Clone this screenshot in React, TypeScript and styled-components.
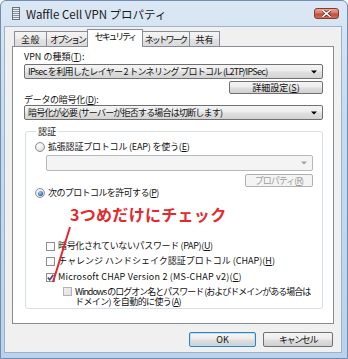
import React from "react";
import styled, { createGlobalStyle, css } from "styled-components";

const Global = createGlobalStyle`
  html, body { margin: 0; padding: 0; background: #ffffff; }
  * { box-sizing: border-box; }
`;

const FONT = `"Noto Sans CJK JP", "Noto Sans", sans-serif`;

const Window = styled.div`
  width: 348px;
  height: 359px;
  display: flex;
  flex-direction: column;
  padding: 0 5px 5px 3px;
  border: 1px solid #6f8db3;
  border-radius: 6px 6px 0 0;
  background: linear-gradient(180deg, #dbe7f4 0%, #c8dbef 30%, #bcd2ea 100%);
  font-family: ${FONT};
  font-size: 9px;
  color: #111;
  overflow: hidden;
`;

const TitleBar = styled.div`
  height: 25px;
  flex: none;
  display: flex;
  align-items: center;
  padding-left: 8px;
`;

const TitleText = styled.span`
  margin-left: 6px;
  font-size: 11.5px;
  line-height: 14px;
  color: #1a1a1a;
`;

const CloseButton = styled.div`
  margin-left: auto;
  margin-right: 3px;
  width: 25px;
  height: 11px;
  border: 1px solid #8a3a30;
  border-radius: 3px;
  background: linear-gradient(180deg, #e8a898 0%, #d47868 45%, #c24a38 55%, #d0705c 100%);
  display: flex;
  align-items: center;
  justify-content: center;
`;

const Client = styled.div`
  flex: 1;
  display: flex;
  flex-direction: column;
  padding: 2px 7px 0 7px;
  background: #f0f0f0;
  border: 1px solid #9db3cc;
`;

const TabRow = styled.div`
  height: 18px;
  flex: none;
  display: flex;
  align-items: flex-end;
  padding-left: 2px;
  margin-bottom: -1px;
  position: relative;
  z-index: 1;
`;

const Tab = styled.div<{ $w: number; $ls?: number; $active?: boolean }>`
  width: ${(p) => p.$w}px;
  height: 16px;
  margin-left: -1px;
  display: flex;
  align-items: center;
  justify-content: center;
  border: 1px solid #898c95;
  background: linear-gradient(180deg, #f4f4f4 0%, #ececec 50%, #e2e2e2 51%, #dadada 100%);
  line-height: 12px;
  padding-top: 1px;
  white-space: nowrap;
  letter-spacing: ${(p) => p.$ls ?? 0}px;
  &:first-child { margin-left: 0; }
  ${(p) =>
    p.$active &&
    css`
      height: 18px;
      margin-left: -2px;
      margin-right: -1px;
      border-bottom: none;
      background: #ffffff;
      position: relative;
      z-index: 2;
      padding-top: 0;
      padding-bottom: 3px;
    `}
`;

const Panel = styled.div`
  height: 278px;
  flex: none;
  position: relative;
  display: flex;
  flex-direction: column;
  padding: 4px 10px 0 11px;
  background: #ffffff;
  border: 1px solid #898c95;
`;

const Txt = styled.span<{ $ls?: number }>`
  letter-spacing: ${(p) => p.$ls ?? 0}px;
  white-space: nowrap;
`;

const Label = styled.div<{ $h?: number }>`
  height: ${(p) => p.$h ?? 12}px;
  line-height: ${(p) => p.$h ?? 12}px;
  white-space: nowrap;
`;

const Combo = styled.div<{ $mt?: number; $disabled?: boolean; $ml?: number }>`
  height: 15px;
  flex: none;
  margin-top: ${(p) => p.$mt ?? 0}px;
  margin-left: ${(p) => p.$ml ?? 0}px;
  display: flex;
  align-items: center;
  padding: 0 5px 0 3px;
  border: 1px solid #707070;
  border-radius: 2px;
  background: linear-gradient(180deg, #f4f4f4 0%, #ececec 48%, #dfdfdf 52%, #d4d4d4 100%);
  line-height: 12px;
  white-space: nowrap;
  ${(p) =>
    p.$disabled &&
    css`
      height: 16px;
      border-color: #b5b8bc;
      background: #f4f4f4;
      color: #9a9a9a;
    `}
`;

const ComboText = styled.span<{ $ls?: number }>`
  flex: 1;
  overflow: hidden;
  letter-spacing: ${(p) => p.$ls ?? 0}px;
`;

const Button = styled.div<{
  $w: number;
  $h?: number;
  $mt?: number;
  $ls?: number;
  $disabled?: boolean;
  $default?: boolean;
}>`
  width: ${(p) => p.$w}px;
  height: ${(p) => p.$h ?? 13}px;
  margin-top: ${(p) => p.$mt ?? 0}px;
  align-self: flex-end;
  flex: none;
  display: flex;
  align-items: center;
  justify-content: center;
  border: 1px solid #707070;
  border-radius: 2px;
  background: linear-gradient(180deg, #f4f4f4 0%, #ececec 48%, #dfdfdf 52%, #d0d0d0 100%);
  line-height: 12px;
  white-space: nowrap;
  letter-spacing: ${(p) => p.$ls ?? 0}px;
  ${(p) =>
    p.$disabled &&
    css`
      border-color: #adb2b5;
      background: #f4f4f4;
      color: #9c9c9c;
    `}
  ${(p) =>
    p.$default &&
    css`
      border-color: #3c7fb1;
      box-shadow: inset 0 0 0 1px #b8e2f8;
    `}
`;

const Group = styled.fieldset`
  margin: 6px 0 0 1px;
  padding: 0 9px 1px 9px;
  min-width: 0;
  border: 1px solid #d5dfe5;
  border-radius: 3px;
  display: flex;
  flex-direction: column;
`;

const Legend = styled.legend`
  margin-left: 1px;
  padding: 0 2px;
  line-height: 11px;
  height: 11px;
`;

const OptionRow = styled.div<{ $mt?: number; $indent?: number; $h?: number }>`
  height: ${(p) => p.$h ?? 12}px;
  margin-top: ${(p) => p.$mt ?? 0}px;
  margin-left: ${(p) => p.$indent ?? 0}px;
  display: flex;
  align-items: center;
  gap: 3px;
  line-height: 12px;
  white-space: nowrap;
`;

const MultiRow = styled(OptionRow)`
  align-items: flex-start;
  line-height: 10px;
`;

const Lines = styled.span`
  display: flex;
  flex-direction: column;
  margin-top: -0.5px;
`;

const Radio = styled.span<{ $checked?: boolean }>`
  width: 10px;
  height: 10px;
  flex: none;
  border-radius: 50%;
  border: 1px solid #8e8f8f;
  background: radial-gradient(circle at 40% 35%, #ffffff 0%, #e6e6e6 60%, #c8c8c8 100%);
  display: flex;
  align-items: center;
  justify-content: center;
  &::after {
    content: "";
    width: 5px;
    height: 5px;
    border-radius: 50%;
    background: ${(p) =>
      p.$checked ? "radial-gradient(circle at 40% 35%, #a8d4f8 0%, #3b7bc4 55%, #1c4f8e 100%)" : "transparent"};
  }
`;

const Check = styled.span<{ $disabled?: boolean }>`
  width: 9px;
  height: 9px;
  flex: none;
  border: 1px solid ${(p) => (p.$disabled ? "#b3b3b3" : "#8e8f8f")};
  background: ${(p) =>
    p.$disabled
      ? "linear-gradient(135deg, #f0f0f0 0%, #e0e0e0 100%)"
      : "linear-gradient(135deg, #f8f8f8 0%, #ffffff 60%, #eaeaea 100%)"};
  display: flex;
  align-items: center;
  justify-content: center;
`;

const Note = styled.div`
  height: 21px;
  margin-top: 5px;
  padding-left: 35px;
  font-weight: 700;
  font-size: 16px;
  letter-spacing: 0.3px;
  line-height: 21px;
  color: #e3292e;
  white-space: nowrap;
`;

const Arrow = styled.svg`
  flex: none;
`;

const Pointer = styled.svg`
  position: absolute;
  left: 0;
  top: 0;
  pointer-events: none;
  z-index: 3;
`;

const ButtonRow = styled.div`
  margin-top: 8px;
  display: flex;
  justify-content: flex-end;
  gap: 7px;
  padding-right: 1px;
`;

const DownArrow = ({ color = "#000" }: { color?: string }) => (
  <Arrow width="6" height="4" viewBox="0 0 6 4">
    <path d="M0 0.5 L6 0.5 L3 3.5 Z" fill={color} />
  </Arrow>
);

const TitleIcon = () => (
  <svg width="8" height="13" viewBox="0 0 8 13">
    <rect x="0.5" y="0.5" width="7" height="12" fill="#e8ecf0" stroke="#6a7280" />
    {[2.5, 4.5, 6.5, 8.5, 10.5].map((y) => (
      <line key={y} x1="1" x2="7" y1={y} y2={y} stroke="#8a929e" strokeWidth="1" />
    ))}
  </svg>
);

const CloseX = () => (
  <svg width="9" height="7" viewBox="0 0 9 7">
    <path d="M1 0.5 L8 6.5 M8 0.5 L1 6.5" stroke="#5a1d16" strokeWidth="3" strokeLinecap="square" />
    <path d="M1 0.5 L8 6.5 M8 0.5 L1 6.5" stroke="#ffffff" strokeWidth="1.6" strokeLinecap="square" />
  </svg>
);

const CheckMark = () => (
  <svg width="7" height="7" viewBox="0 0 7 7">
    <path d="M0.8 3.6 L2.8 5.8 L6.3 0.8" fill="none" stroke="#3a4f8c" strokeWidth="1.6" />
  </svg>
);

export default function App() {
  return (
    <>
      <Global />
      <Window>
        <TitleBar>
          <TitleIcon />
          <TitleText>Waffle Cell VPN プロパティ</TitleText>
          <CloseButton>
            <CloseX />
          </CloseButton>
        </TitleBar>
        <Client>
          <TabRow>
            <Tab $w={33} $ls={0.5}>全般</Tab>
            <Tab $w={43} $ls={-2}>オプション</Tab>
            <Tab $w={56} $ls={-2.2} $active>
              セキュリティ
            </Tab>
            <Tab $w={49} $ls={-2.1}>ネットワーク</Tab>
            <Tab $w={31}>共有</Tab>
          </TabRow>
          <Panel>
            <Label>
              VPN の種類(<u>T</u>):
            </Label>
            <Combo $mt={1}>
              <ComboText $ls={-0.7}>IPsec を利用したレイヤー 2 トンネリング プロトコル (L2TP/IPSec)</ComboText>
              <DownArrow />
            </Combo>
            <Button $w={94} $mt={2}>
              詳細設定(<u>S</u>)
            </Button>
            <Label $h={11}>
              <Txt $ls={-0.3}>
                データの暗号化(<u>D</u>):
              </Txt>
            </Label>
            <Combo>
              <ComboText $ls={-0.8}>暗号化が必要 (サーバーが拒否する場合は切断します)</ComboText>
              <DownArrow />
            </Combo>
            <Group>
              <Legend>認証</Legend>
              <OptionRow $mt={4}>
                <Radio />
                <Txt $ls={-0.2}>
                  拡張認証プロトコル (EAP) を使う(<u>E</u>)
                </Txt>
              </OptionRow>
              <Combo $disabled $ml={11} $mt={2}>
                <ComboText />
                <DownArrow color="#a0a0a0" />
              </Combo>
              <Button $w={68} $mt={3} $ls={-1} $disabled>
                プロパティ(<u>R</u>)
              </Button>
              <OptionRow>
                <Radio $checked />
                <Txt $ls={-0.6}>
                  次のプロトコルを許可する(<u>P</u>)
                </Txt>
              </OptionRow>
              <Note>3つめだけにチェック</Note>
              <OptionRow $mt={15} $indent={11}>
                <Check />
                <Txt $ls={-0.35}>
                  暗号化されていないパスワード (PAP)(<u>U</u>)
                </Txt>
              </OptionRow>
              <OptionRow $mt={3} $indent={11}>
                <Check />
                <Txt>
                  チャレンジ ハンドシェイク認証プロトコル (CHAP)(<u>H</u>)
                </Txt>
              </OptionRow>
              <OptionRow $mt={4} $indent={11}>
                <Check>
                  <CheckMark />
                </Check>
                <Txt $ls={0.2}>
                  Microsoft CHAP Version 2 (MS-CHAP v2)(<u>C</u>)
                </Txt>
              </OptionRow>
              <MultiRow $mt={4} $indent={28} $h={20}>
                <Check $disabled />
                <Lines>
                  <Txt $ls={-1}>Windows のログオン名とパスワード (およびドメインがある場合は</Txt>
                  <Txt $ls={-0.6}>
                    ドメイン) を自動的に使う(<u>A</u>)
                  </Txt>
                </Lines>
              </MultiRow>
            </Group>
            <Pointer width="320" height="276" viewBox="0 0 320 276">
              <line x1="57" y1="180" x2="40" y2="235" stroke="#e3292e" strokeWidth="2" />
            </Pointer>
          </Panel>
          <ButtonRow>
            <Button $w={67} $h={15} $default>
              OK
            </Button>
            <Button $w={70} $h={15} $ls={-1.4}>
              キャンセル
            </Button>
          </ButtonRow>
        </Client>
      </Window>
    </>
  );
}
